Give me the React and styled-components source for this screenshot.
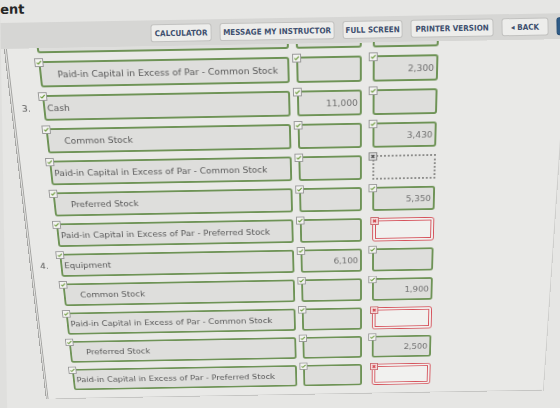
import React from "react";
import styled, { createGlobalStyle } from "styled-components";

const GlobalStyle = createGlobalStyle`
  html, body {
    margin: 0;
    width: 560px;
    height: 408px;
    overflow: hidden;
    background: #dfdfdd;
  }
  body {
    font-family: "DejaVu Sans", Verdana, sans-serif;
  }
`;

// the whole screen sits a touch off level
const Screen = styled.div`
  width: 600px;
  height: 450px;
  display: flex;
  flex-direction: column;
  background: #e6e6e4;
  transform-origin: 0 0;
  transform: rotate(-1deg);
`;

const PageTitle = styled.div`
  height: 23px;
  box-sizing: border-box;
  padding-top: 2px;
  font: bold 13px "DejaVu Sans", sans-serif;
  line-height: 16px;
  color: #262626;
`;

const Toolbar = styled.div`
  height: 26px;
  flex-shrink: 0;
  display: flex;
  align-items: center;
  gap: 8px;
  padding-left: 150px;
  background: #d6d6d4;
`;

const ToolButton = styled.button`
  width: ${(p) => p.$w}px;
  height: 18px;
  padding: 0;
  border: 1px solid #c2c2c0;
  border-radius: 3px;
  background: #ededeb;
  color: #40506f;
  font: bold 8px "DejaVu Sans Condensed", "DejaVu Sans", sans-serif;
  white-space: nowrap;
`;

const BlueButton = styled(ToolButton)`
  background: #2f5c88;
  border-color: #264d74;
`;

// journal sheet, tilted back like the screen it is on
const Sheet = styled.div`
  flex: 1;
  width: 560px;
  margin-left: 3px;
  border-left: 3px double #a3a3a1;
  border-right: 1px solid #cfcfcd;
  background: #e9e9e7;
  overflow: hidden;
  transform-origin: 307px 0;
  transform: perspective(400px) rotateX(-7.6deg);
`;

const Entries = styled.div`
  margin-top: -22px;
  display: flex;
  flex-direction: column;
  gap: 8px;
`;

const Line = styled.div`
  display: flex;
  align-items: center;
  height: 27px;
`;

const Num = styled.span`
  width: 30px;
  padding-left: 8px;
  box-sizing: border-box;
  font-size: 9.3px;
  color: #555;
`;

const borders = {
  ok: "border: 2px solid #6e9356; background: #dededc;",
  wrong: "border: 4px double #d5525b; background: #f1f1ef;",
  blank: "border: 2px dotted #8d8d8b; border-radius: 0; background: #e6e6e4;",
};

const Field = styled.div`
  position: relative;
  box-sizing: border-box;
  height: 27px;
  display: flex;
  align-items: center;
  border-radius: 3px;
  font-size: 9.3px;
  white-space: nowrap;
  ${(p) => borders[p.$status]}
`;

const AccountField = styled(Field)`
  width: 252px;
  margin-right: 7px;
  padding-left: ${(p) => (p.$indent ? 16 : 2)}px;
  color: #595959;
`;

const AmountField = styled(Field)`
  width: 66px;
  margin-right: ${(p) => p.$mr || 0}px;
  justify-content: flex-end;
  padding-right: 2px;
  color: #707070;
`;

const MarkBox = styled.svg`
  position: absolute;
  top: -5px;
  left: -6px;
  width: 9px;
  height: 9px;
`;

const NextBlock = styled.div`
  height: 60px;
  margin: 2px 0 0 7px;
  border: 1px solid #c5c5c3;
  border-radius: 2px;
  background: #eeeeec;
`;

function Mark({ status }) {
  if (status === "ok") {
    return (
      <MarkBox viewBox="0 0 9 9">
        <rect x="0.5" y="0.5" width="8" height="8" fill="#f3f3f1" stroke="#999" />
        <path d="M2.3 4.6 L3.8 6 L6.8 2.8" fill="none" stroke="#6c9a3c" strokeWidth="1.2" />
      </MarkBox>
    );
  }
  const red = status === "wrong";
  return (
    <MarkBox viewBox="0 0 9 9">
      <rect x="0.5" y="0.5" width="8" height="8" fill={red ? "#f4dada" : "#dcdcdc"} stroke={red ? "#c96a70" : "#888"} />
      <path d="M3 3 L6 6 M6 3 L3 6" stroke={red ? "#d0343f" : "#444"} strokeWidth="1.3" />
    </MarkBox>
  );
}

const rows = [
  { account: "", debit: "", credit: "" },
  { account: "Paid-in Capital in Excess of Par - Common Stock", indent: true, credit: "2,300" },
  { num: "3.", account: "Cash", debit: "11,000" },
  { account: "Common Stock", indent: true, credit: "3,430" },
  { account: "Paid-in Capital in Excess of Par - Common Stock", creditStatus: "blank" },
  { account: "Preferred Stock", indent: true, credit: "5,350" },
  { account: "Paid-in Capital in Excess of Par - Preferred Stock", creditStatus: "wrong" },
  { num: "4.", account: "Equipment", debit: "6,100" },
  { account: "Common Stock", indent: true, credit: "1,900" },
  { account: "Paid-in Capital in Excess of Par - Common Stock", creditStatus: "wrong" },
  { account: "Preferred Stock", indent: true, credit: "2,500" },
  { account: "Paid-in Capital in Excess of Par - Preferred Stock", creditStatus: "wrong" },
];

export default function App() {
  return (
    <>
      <GlobalStyle />
      <Screen>
        <PageTitle>ent</PageTitle>
        <Toolbar>
          <ToolButton $w={61}>CALCULATOR</ToolButton>
          <ToolButton $w={115}>MESSAGE MY INSTRUCTOR</ToolButton>
          <ToolButton $w={60}>FULL SCREEN</ToolButton>
          <ToolButton $w={83}>PRINTER VERSION</ToolButton>
          <ToolButton $w={47}>{"\u25C2"} BACK</ToolButton>
          <BlueButton $w={40} />
        </Toolbar>
        <Sheet>
          <Entries>
            {rows.map((r, i) => {
              const creditStatus = r.creditStatus || "ok";
              return (
                <Line key={i}>
                  <Num>{r.num}</Num>
                  <AccountField $status="ok" $indent={r.indent}>
                    <Mark status="ok" />
                    {r.account}
                  </AccountField>
                  <AmountField $status="ok" $mr={11}>
                    <Mark status="ok" />
                    {r.debit}
                  </AmountField>
                  <AmountField $status={creditStatus}>
                    <Mark status={creditStatus} />
                    {r.credit}
                  </AmountField>
                </Line>
              );
            })}
            <NextBlock />
          </Entries>
        </Sheet>
      </Screen>
    </>
  );
}
